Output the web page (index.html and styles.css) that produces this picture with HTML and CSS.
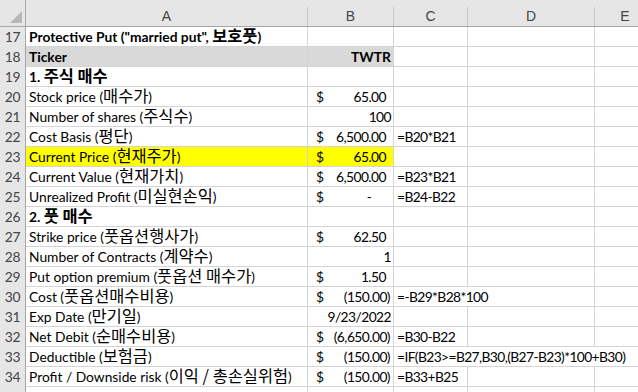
FILE: index.html
```html
<!DOCTYPE html>
<html>
<head>
<meta charset="utf-8">
<link rel="stylesheet" href="styles.css">
</head>
<body>
<div class="sheet">
  <div class="row hdr">
    <div class="corner"><svg width="26" height="26" viewBox="0 0 26 26"><polygon points="22,11 22,23 10,23" fill="#b7b7b7"/></svg></div>
    <div class="ch">A</div><div class="ch">B</div><div class="ch">C</div><div class="ch">D</div><div class="ch last">E</div>
  </div>

  <div class="row"><div class="rh">17</div><div class="c b">Protective Put ("married put", <span class="k">보호풋</span>)</div><div class="c"></div><div class="c"></div><div class="c"></div><div class="c"></div></div>
  <div class="row"><div class="rh">18</div><div class="c b gray">Ticker</div><div class="c b gray r">TWTR</div><div class="c"></div><div class="c"></div><div class="c"></div></div>
  <div class="row"><div class="rh">19</div><div class="c b">1. <span class="k">주식 매수</span></div><div class="c"></div><div class="c"></div><div class="c"></div><div class="c"></div></div>
  <div class="row"><div class="rh">20</div><div class="c">Stock price (<span class="k">매수가</span>)</div><div class="c acc"><span>$</span><span class="num pos">65.00</span></div><div class="c"></div><div class="c"></div><div class="c"></div></div>
  <div class="row"><div class="rh">21</div><div class="c">Number of shares (<span class="k">주식수</span>)</div><div class="c r num">100</div><div class="c"></div><div class="c"></div><div class="c"></div></div>
  <div class="row"><div class="rh">22</div><div class="c">Cost Basis (<span class="k">평단</span>)</div><div class="c acc"><span>$</span><span class="num pos">6,500.00</span></div><div class="c f">=B20*B21</div><div class="c"></div><div class="c"></div></div>
  <div class="row"><div class="rh">23</div><div class="c yel">Current Price (<span class="k">현재주가</span>)</div><div class="c acc yel"><span>$</span><span class="num pos">65.00</span></div><div class="c"></div><div class="c"></div><div class="c"></div></div>
  <div class="row"><div class="rh">24</div><div class="c">Current Value (<span class="k">현재가치</span>)</div><div class="c acc"><span>$</span><span class="num pos">6,500.00</span></div><div class="c f">=B23*B21</div><div class="c"></div><div class="c"></div></div>
  <div class="row"><div class="rh">25</div><div class="c">Unrealized Profit (<span class="k">미실현손익</span>)</div><div class="c acc"><span>$</span><span class="zero">-</span></div><div class="c f">=B24-B22</div><div class="c"></div><div class="c"></div></div>
  <div class="row"><div class="rh">26</div><div class="c b">2. <span class="k">풋 매수</span></div><div class="c"></div><div class="c"></div><div class="c"></div><div class="c"></div></div>
  <div class="row"><div class="rh">27</div><div class="c">Strike price (<span class="k">풋옵션행사가</span>)</div><div class="c acc"><span>$</span><span class="num pos">62.50</span></div><div class="c"></div><div class="c"></div><div class="c"></div></div>
  <div class="row"><div class="rh">28</div><div class="c">Number of Contracts (<span class="k">계약수</span>)</div><div class="c r num">1</div><div class="c"></div><div class="c"></div><div class="c"></div></div>
  <div class="row"><div class="rh">29</div><div class="c">Put option premium (<span class="k">풋옵션 매수가</span>)</div><div class="c acc"><span>$</span><span class="num pos">1.50</span></div><div class="c"></div><div class="c"></div><div class="c"></div></div>
  <div class="row"><div class="rh">30</div><div class="c">Cost (<span class="k">풋옵션매수비용</span>)</div><div class="c acc"><span>$</span><span class="num neg">(150.00)</span></div><div class="c f span2">=-B29*B28*100</div><div class="c"></div></div>
  <div class="row"><div class="rh">31</div><div class="c">Exp Date (<span class="k">만기일</span>)</div><div class="c r num">9/23/2022</div><div class="c"></div><div class="c"></div><div class="c"></div></div>
  <div class="row"><div class="rh">32</div><div class="c">Net Debit (<span class="k">순매수비용</span>)</div><div class="c acc"><span>$</span><span class="num neg">(6,650.00)</span></div><div class="c f">=B30-B22</div><div class="c"></div><div class="c"></div></div>
  <div class="row"><div class="rh">33</div><div class="c">Deductible (<span class="k">보험금</span>)</div><div class="c acc"><span>$</span><span class="num neg">(150.00)</span></div><div class="c f span3">=IF(B23&gt;=B27,B30,(B27-B23)*100+B30)</div></div>
  <div class="row"><div class="rh">34</div><div class="c">Profit / Downside risk (<span class="k">이익 / 총손실위험</span>)</div><div class="c acc"><span>$</span><span class="num neg">(150.00)</span></div><div class="c f">=B33+B25</div><div class="c"></div><div class="c"></div></div>
  <div class="row"><div class="rh"></div><div class="c"></div><div class="c"></div><div class="c"></div><div class="c"></div><div class="c"></div></div>
</div>
</body>
</html>
```
FILE: styles.css
```css
* { box-sizing: border-box; }
html, body { margin: 0; padding: 0; background: #fff; }
body { width: 638px; height: 392px; overflow: hidden; }
.sheet {
  font-family: Lato, "Noto Sans CJK KR", sans-serif;
  font-size: 13.8px;
  color: #000;
}
.row {
  display: grid;
  grid-template-columns: 26px 282px 86px 74px 127px 60px;
  height: 20px;
}
.row.hdr {
  height: 27px;
  background: #e6e6e6;
  border-bottom: 1px solid #a6a6a6;
}
.corner { height: 26px; border-right: 1px solid #a6a6a6; }
.corner svg { display: block; }
.ch {
  margin-top: 7px;
  height: 19px;
  border-right: 1px solid #c8c8c8;
  text-align: center;
  line-height: 19px;
  color: #444;
  font-family: "Liberation Sans", Arial, sans-serif;
  font-size: 14px;
}
.ch.last { border-right: none; }
.rh {
  background: #e6e6e6;
  border-right: 1px solid #a6a6a6;
  border-bottom: 1px solid #c8c8c8;
  text-align: center;
  line-height: 20px;
  color: #444;
  letter-spacing: -0.3px;
}
.c {
  border-right: 1px solid #d4d4d4;
  border-bottom: 1px solid #d4d4d4;
  padding: 0 3px;
  line-height: 20px;
  height: 20px;
  white-space: nowrap;
}
.k {
  font-family: "Noto Sans CJK KR", sans-serif;
  font-size: 16.4px;
  line-height: 16px;
}
.b { font-weight: bold; }
.r { text-align: right; padding-right: 2px; }
.num { letter-spacing: -0.55px; }
.gray { background: #d9d9d9; }
.yel { background: #ffff00; }
.acc { display: flex; justify-content: space-between; padding-left: 8px; padding-right: 2px; }
.acc .pos { padding-right: 5px; }
.acc .zero { padding-right: 19px; }
.acc .neg { padding-right: 1px; }
.f { padding-left: 3px; letter-spacing: -0.6px; }
.span2 { grid-column: span 2; }
.span3 { grid-column: span 3; }
```
